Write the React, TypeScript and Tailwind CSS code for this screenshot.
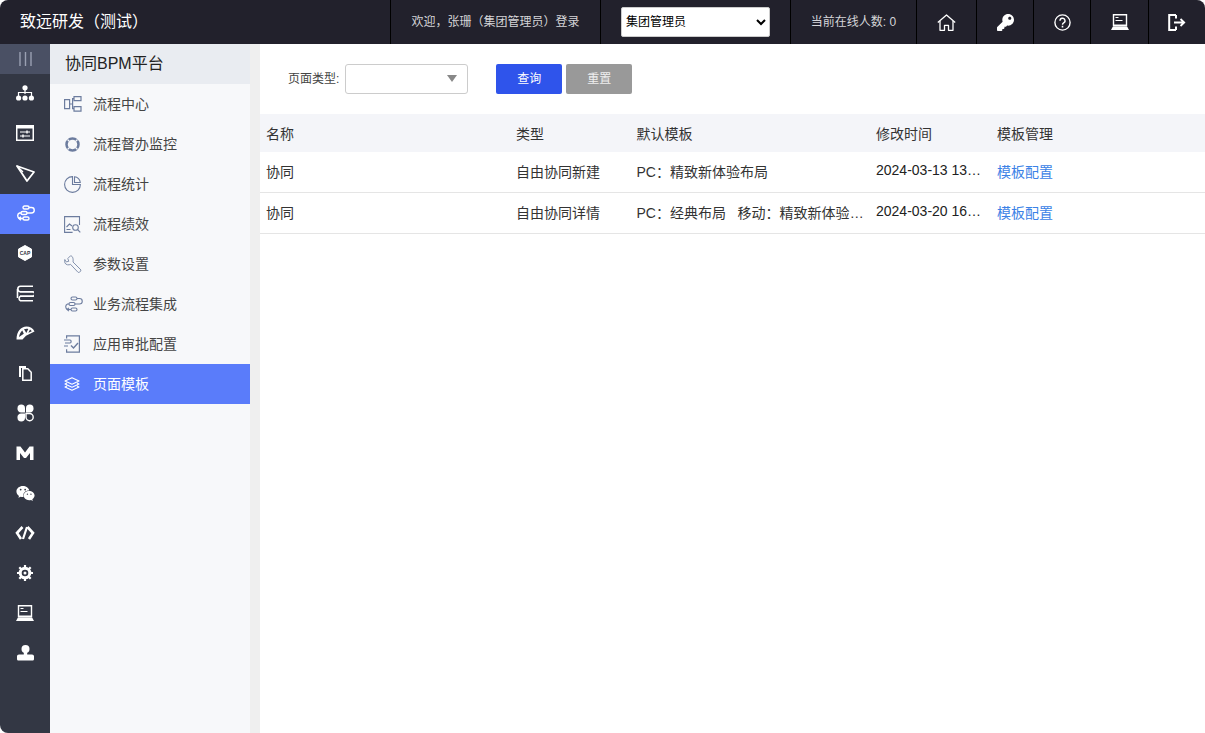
import React from "react";
import { FaKey, FaWeixin } from "react-icons/fa";

const font = { fontFamily: '"Liberation Sans", "Noto Sans CJK SC", sans-serif' };

const Sitemap = () => (
  <svg width="18" height="16" viewBox="0 0 18 16" fill="none">
    <circle cx="9" cy="2.800" r="2.600" fill="#fff" />
    <path d="M9 5v4M2.500 11V7.500h13V11" stroke="#fff" strokeWidth="1.200" />
    <circle cx="2.600" cy="13" r="2.600" fill="#fff" />
    <circle cx="9" cy="13" r="2.600" fill="#fff" />
    <circle cx="15.400" cy="13" r="2.600" fill="#fff" />
  </svg>
);

const Sliders = () => (
  <svg width="18" height="16" viewBox="0 0 18 16" fill="none">
    <path d="M0 0h18v16H0z" fill="#fff" />
    <path d="M1.500 3.500h15v11h-15z" fill="#333744" />
    <path d="M4 7h10M4 11h10" stroke="#fff" strokeWidth="1.200" />
    <path d="M11 5.500v3M7 9.500v3" stroke="#fff" strokeWidth="1.400" />
  </svg>
);

const PenTool = () => (
  <svg width="19" height="17" viewBox="0 0 19 17" fill="none">
    <path d="M1 1l17 6-7 9z" stroke="#fff" strokeWidth="1.800" strokeLinejoin="round" />
    <path d="M1 1l6 6" stroke="#fff" strokeWidth="1.200" />
  </svg>
);

const Flow = ({ color = "#fff", w = 1.4 }: { color?: string; w?: number }) => (
  <svg width="19" height="16" viewBox="0 0 19 16" fill="none" stroke={color} strokeWidth={w}>
    <rect x="7" y="1" width="6" height="3" rx="1.500" />
    <rect x="5" y="6.500" width="6" height="3" rx="1.500" />
    <rect x="7" y="12" width="6" height="3" rx="1.500" />
    <path d="M13 2.500h2.500a2.700 2.700 0 0 1 0 5.500H11M5 8H3.500a3 3 0 0 0 0 5.500H7" />
    <path d="M5 11.800l-2 1.700 2 1.700" />
  </svg>
);

const Cap = () => (
  <svg width="16" height="16" viewBox="0 0 16 16">
    <path d="M8 .5l6.500 3.600v7.800L8 15.500l-6.500-3.600V4.100z" fill="#fff" stroke="#fff" strokeLinejoin="round" />
    <text x="8" y="9.700" textAnchor="middle" fontSize="5" fontWeight="700" fill="#333744" fontFamily="Liberation Sans">
      CAP
    </text>
  </svg>
);

const Stack = () => (
  <svg width="18" height="17" viewBox="0 0 18 17" fill="none" stroke="#fff" strokeWidth="1.600">
    <path d="M17 1.300H4.500a2.700 2.700 0 0 0 0 5.400H17" />
    <path d="M1 6.700h12.500a2.300 2.300 0 0 1 0 4.600H1" transform="translate(3 0)" />
    <path d="M17 11.300H4.500a2.400 2.400 0 0 0 0 4.400H17" />
    <path d="M1.500 4v9" />
  </svg>
);

const Gauge = () => (
  <svg width="19" height="14" viewBox="0 0 19 14" fill="none">
    <path d="M.5 13.500C.5 5.500 5 .5 10.500.5c3.500 0 6.500 1.700 8 5l-8.500 4.200-3.500 3.800z" fill="#fff" />
    <path d="M3 11C3.500 8.300 4.600 6 6.300 4.500l1.500 3.200zM8 3.300c1.400-.6 3-.7 4.300-.4L10.300 7zM14 3.600c.7.400 1.300 1 1.800 1.600l-3.400 1.600z" fill="#333744" />
  </svg>
);

const Pages = () => (
  <svg width="14" height="16" viewBox="0 0 14 16" fill="none">
    <path d="M1 1h7v2H3v9H1z" fill="#fff" />
    <path d="M4.800 3.800h5l3.400 3.400v8h-8.400z" stroke="#fff" strokeWidth="1.500" />
  </svg>
);

const Clover = () => (
  <svg width="17" height="18" viewBox="0 0 17 18">
    <path d="M.5 4.200a3.700 3.700 0 0 1 7.500 0v4.300H4.200A3.700 3.700 0 0 1 .5 4.200z" fill="#fff" />
    <path d="M16.500 4.200a3.700 3.700 0 0 0-7.500 0v4.300h3.800a3.700 3.700 0 0 0 3.700-4.300z" fill="#fff" />
    <path d="M.5 13.800a3.700 3.700 0 0 0 7.500 0V9.500H4.200a3.700 3.700 0 0 0-3.700 4.300z" fill="#fff" />
    <path d="M9 9.500h3.500a3.600 3.600 0 1 1-3.500 3.800z" fill="none" stroke="#fff" strokeWidth="1.400" />
  </svg>
);

const MLogo = () => (
  <svg width="18" height="14" viewBox="0 0 18 14">
    <path d="M.5 14V.5h4L9 6.500 13.500.5h4V14h-3.500V7L10 12H8L4 7v7z" fill="#fff" />
  </svg>
);

const Code = () => (
  <svg width="20" height="14" viewBox="0 0 20 14" fill="none" stroke="#fff" strokeWidth="2.600">
    <path d="M7.500 1L2 7l4 6M12.500 1L18 7l-4 6" />
    <path d="M12 1L8 13" strokeWidth="2.200" />
  </svg>
);

const Gear = () => (
  <svg width="16" height="16" viewBox="0 0 16 16" fill="none">
    <circle cx="8" cy="8" r="4.800" stroke="#fff" strokeWidth="3" />
    <path
      d="M8 0v3M8 13v3M0 8h3M13 8h3M2.300 2.300l2.100 2.100M11.600 11.600l2.100 2.100M2.300 13.700l2.100-2.100M11.600 4.400l2.100-2.100"
      stroke="#fff"
      strokeWidth="2.200"
    />
    <circle cx="8" cy="8" r="1.500" fill="#fff" />
  </svg>
);

const Laptop = () => (
  <svg width="18" height="16" viewBox="0 0 18 16" fill="none">
    <path d="M2.500.7h13v10.600h-13z" stroke="#fff" strokeWidth="1.400" />
    <path d="M4.500 3.500h3M4.500 6.500h7" stroke="#fff" strokeWidth="1.200" />
    <path d="M2 12.200h14l2 3.800H0z" fill="#fff" />
  </svg>
);

const Stamp = () => (
  <svg width="17" height="16" viewBox="0 0 17 16">
    <circle cx="8.500" cy="4" r="4" fill="#fff" />
    <path d="M6.800 6h3.400v3.500H15c1.200 0 2 .8 2 2V14c0 1-.8 1.500-1.500 1.500h-14C.8 15.500 0 15 0 14v-2.500c0-1.200.8-2 2-2h4.800z" fill="#fff" />
  </svg>
);

const Home = () => (
  <svg width="19" height="17" viewBox="0 0 19 17" fill="none" stroke="#fff" strokeWidth="1.300" strokeLinejoin="round">
    <path d="M.8 8.500L9.500 1l8.700 7.500" />
    <path d="M3 7v9.300h4.500v-5h4v5H16V7" />
  </svg>
);

const Help = () => (
  <svg width="17" height="17" viewBox="0 0 17 17" fill="none" stroke="#fff" strokeWidth="1.400">
    <circle cx="8.500" cy="8.500" r="7.600" />
    <path d="M6 6.700a2.500 2.500 0 1 1 3.700 2.200c-.8.500-1.200.9-1.200 1.900" />
    <path d="M8.500 11.800v1.600" strokeWidth="1.600" />
  </svg>
);

const Logout = () => (
  <svg width="18" height="17" viewBox="0 0 18 17" fill="none" stroke="#fff">
    <path d="M8 1H1.200v15H8M8 1v3.500M8 12.500V16" strokeWidth="2" />
    <path d="M6 8.500h10M12.500 5l3.700 3.500-3.700 3.500" strokeWidth="1.800" />
  </svg>
);

const Bars = () => (
  <svg width="13" height="14" viewBox="0 0 13 14" fill="none" stroke="#9aa0b2" strokeWidth="1.400">
    <path d="M1 0v14M6.500 0v14M12 0v14" />
  </svg>
);

const iconColor = "#6c7c9e";

const Tree = () => (
  <svg width="18" height="16" viewBox="0 0 18 16" fill="none" stroke={iconColor} strokeWidth="1.200">
    <path d="M.6 3.600h5v9h-5zM5.600 8h3M10 .6h7v4h-7zM10 10.600h7v4.500h-7z" />
    <path d="M10 2.600H8.600v10H10" />
  </svg>
);

const Ring = () => (
  <svg width="17" height="17" viewBox="0 0 17 17" fill="none" stroke={iconColor}>
    <circle cx="8.500" cy="8.500" r="6" strokeWidth="2.500" />
    <path d="M3.500 3.500l2 2M13.500 3.500l-2 2M3.500 13.500l2-2M13.500 13.500l-2-2" strokeWidth="1.200" stroke="#f7f8fa" />
  </svg>
);

const Pie = () => (
  <svg width="17" height="17" viewBox="0 0 17 17" fill="none" stroke={iconColor} strokeWidth="1.100">
    <path d="M8.500.6a7.900 7.900 0 1 0 7.900 7.900H8.500z" />
    <path d="M10.500.8a6 6 0 0 1 5.800 5.700h-5.800z" />
  </svg>
);

const Report = () => (
  <svg width="17" height="17" viewBox="0 0 17 17" fill="none" stroke={iconColor} strokeWidth="1.100">
    <path d="M15.500 9V.6H.6v15.800h8" />
    <path d="M2.500 11l3-3 2.500 2M2.500 13.500h4" />
    <circle cx="11.500" cy="11.500" r="2.800" />
    <path d="M13.500 13.500l2.800 2.800" />
  </svg>
);

const Wrench = () => (
  <svg width="18" height="18" viewBox="0 0 18 18" fill="none" stroke="#8593ae" strokeWidth="1" strokeLinejoin="round">
    <path d="M6.500.8L3.800 3.500l1 2.800-2.600.6L.8 4.500C.2 7 .9 9.300 3.500 9.800c1.300.2 2 0 3-.5l7.500 8c.8.700 2.800-.5 3-2.300L9 7c.5-2.800-.2-6.200-2.500-6.200z" />
  </svg>
);

const Approve = () => (
  <svg width="17" height="18" viewBox="0 0 17 18" fill="none" stroke={iconColor} strokeWidth="1.200">
    <path d="M2.600 3.500V.8h12.800v16.400H2.600v-3" />
    <path d="M0 5h6c1.500 0 1.500 3 0 3H1M0 11h4" />
    <path d="M7 10.500l2.500 2.500L14 8" strokeWidth="1.400" />
  </svg>
);

const Layers = () => (
  <svg width="16" height="14" viewBox="0 0 16 14" fill="none" stroke="#fff" strokeWidth="1.100" strokeLinejoin="round">
    <path d="M8 .7l7 3.300-7 3.300L1 4zM3 6L1 7l7 3.300L15 7l-2-1M3 9l-2 1 7 3.300 7-3.300-2-1" />
  </svg>
);

const railIcons = [
  <Sitemap />,
  <Sliders />,
  <PenTool />,
  <Flow />,
  <Cap />,
  <Stack />,
  <Gauge />,
  <Pages />,
  <Clover />,
  <MLogo />,
  <FaWeixin className="text-white text-[19px]" />,
  <Code />,
  <Gear />,
  <Laptop />,
  <Stamp />,
];

const menuItems = [
  { label: "流程中心", icon: <Tree /> },
  { label: "流程督办监控", icon: <Ring /> },
  { label: "流程统计", icon: <Pie /> },
  { label: "流程绩效", icon: <Report /> },
  { label: "参数设置", icon: <Wrench /> },
  { label: "业务流程集成", icon: <Flow color={iconColor} w={1.1} /> },
  { label: "应用审批配置", icon: <Approve /> },
  { label: "页面模板", icon: <Layers />, active: true },
];

const rows = [
  {
    name: "协同",
    type: "自由协同新建",
    tpl: "PC：精致新体验布局",
    time: "2024-03-13 13:25:41",
  },
  {
    name: "协同",
    type: "自由协同详情",
    tpl: "PC：经典布局   移动：精致新体验布局",
    time: "2024-03-20 16:08:12",
  },
];

const headCell = "px-1.5 pt-0.5 font-normal text-left";
const bodyCell = "px-1.5 truncate border-b border-[#e5e5e5]";

const App = () => {
  return (
    <div className="w-[1205px] h-[733px] bg-white overflow-hidden">
      <div className="w-full h-full flex flex-col rounded-lg overflow-hidden" style={font}>
        <header className="h-11 shrink-0 bg-[#22212c] flex items-center text-[#d5d5d8] text-xs">
          <div className="w-[390px] pl-5 text-white text-base">致远研发（测试）</div>
          <div className="w-[210px] h-full border-l border-black flex items-center justify-center">
            欢迎，张珊（集团管理员）登录
          </div>
          <div className="w-[190px] h-full border-l border-black flex items-center pl-5">
            <select className="w-[149px] h-[30px] bg-white text-black text-xs rounded-[2px] border border-[#ccc]">
              <option>集团管理员</option>
            </select>
          </div>
          <div className="w-[126px] h-full border-l border-black flex items-center justify-center">
            当前在线人数: 0
          </div>
          <div className="w-[60px] h-full border-l border-black flex items-center justify-center">
            <Home />
          </div>
          <div className="w-[57px] h-full border-l border-black flex items-center justify-center">
            <FaKey className="text-white text-[17px]" />
          </div>
          <div className="w-[57px] h-full border-l border-black flex items-center justify-center">
            <Help />
          </div>
          <div className="w-[58px] h-full border-l border-black flex items-center justify-center">
            <Laptop />
          </div>
          <div className="flex-1 h-full border-l border-black flex items-center justify-center">
            <Logout />
          </div>
        </header>

        <div className="flex-1 flex min-h-0">
          <nav className="w-[50px] shrink-0 bg-[#333744] flex flex-col">
            <div className="h-[30px] bg-[#4a5064] flex items-center justify-center">
              <Bars />
            </div>
            {railIcons.map((icon, i) => (
              <div
                key={i}
                className={`h-10 pb-0.5 flex items-center justify-center ${i === 3 ? "bg-[#5a7cfa]" : ""}`}
              >
                {icon}
              </div>
            ))}
          </nav>

          <aside className="w-[200px] shrink-0 bg-[#f7f8fa] flex flex-col">
            <div className="h-10 bg-[#e9ecf1] flex items-center pl-[15px] text-base text-[#222]">
              协同BPM平台
            </div>
            {menuItems.map((item) => (
              <div
                key={item.label}
                className={`h-10 flex items-center text-sm ${
                  item.active ? "bg-[#5a7cfa] text-white" : "text-[#444]"
                }`}
              >
                <span className="w-[43px] pl-[14px] flex items-center">{item.icon}</span>
                {item.label}
              </div>
            ))}
          </aside>

          <div className="w-2.5 shrink-0 bg-[#efefef]" />

          <main className="flex-1 min-w-0 bg-white">
            <div className="h-[70px] pt-5 pl-7 flex items-start">
              <label className="h-[30px] flex items-center text-xs text-[#444] mr-1.5">页面类型:</label>
              <div className="w-[123px] h-[30px] pb-0.5 border border-[#ccc] rounded-[3px] flex items-center justify-end pr-2.5">
                <span className="w-0 h-0 border-x-[5.500px] border-x-transparent border-t-[7px] border-t-[#888]" />
              </div>
              <button className="ml-7 w-[66px] h-[30px] bg-[#2f54eb] text-white text-xs rounded-[2px]">查询</button>
              <button className="ml-1 w-[66px] h-[30px] bg-[#999] text-[#eee] text-xs rounded-[2px]">重置</button>
            </div>

            <table className="w-full table-fixed border-separate border-spacing-0 text-sm text-[#333]">
              <colgroup>
                <col className="w-[250px]" />
                <col className="w-[120.500px]" />
                <col className="w-[240px]" />
                <col className="w-[120.500px]" />
                <col />
              </colgroup>
              <thead>
                <tr className="h-[38px] bg-[#f4f5f9]">
                  <th className={headCell}>名称</th>
                  <th className={headCell}>类型</th>
                  <th className={headCell}>默认模板</th>
                  <th className={`${headCell} pl-[5.500px]`}>修改时间</th>
                  <th className={headCell}>模板管理</th>
                </tr>
              </thead>
              <tbody>
                {rows.map((row) => (
                  <tr key={row.type} className="h-[41px]">
                    <td className={bodyCell}>{row.name}</td>
                    <td className={bodyCell}>{row.type}</td>
                    <td className={`${bodyCell} whitespace-pre`}>{row.tpl}</td>
                    <td className={`${bodyCell} pl-[5.500px] pr-2 pb-1 text-[#222]`}>{row.time}</td>
                    <td className={`${bodyCell} text-[#3b82e6]`}>模板配置</td>
                  </tr>
                ))}
              </tbody>
            </table>
          </main>
        </div>
      </div>
    </div>
  );
};

export default App;
